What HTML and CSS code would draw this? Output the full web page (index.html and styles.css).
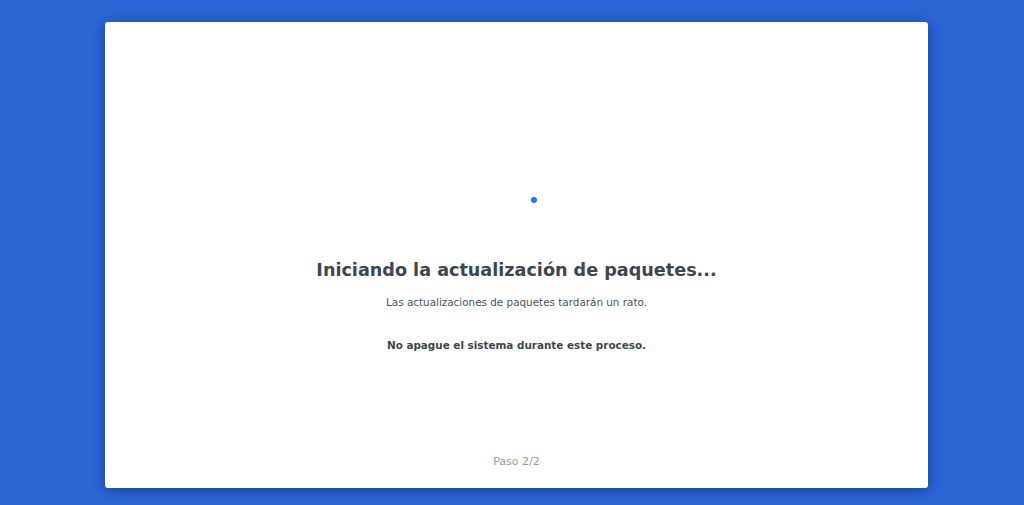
FILE: index.html
```html
<!DOCTYPE html>
<html lang="es">
<head>
<meta charset="utf-8">
<link rel="stylesheet" href="styles.css">
</head>
<body>
<div class="card">
  <div class="main">
    <div class="spinner"><span class="dot"></span></div>
    <h1 class="title">Iniciando la actualización de paquetes...</h1>
    <p class="subtitle">Las actualizaciones de paquetes tardarán un rato.</p>
    <p class="warning">No apague el sistema durante este proceso.</p>
  </div>
  <div class="step">Paso 2/2</div>
</div>
</body>
</html>
```
FILE: styles.css
```css
html, body {
  margin: 0;
  height: 100%;
}
body {
  background: #2b66d7;
  font-family: "DejaVu Sans", Verdana, sans-serif;
  color: #3b4651;
  padding: 22px 96px 17px 105px;
  box-sizing: border-box;
}
.card {
  background: #fff;
  height: 466px;
  border-radius: 3px;
  box-shadow: 0 2px 14px rgba(10, 30, 80, 0.55);
  display: flex;
  flex-direction: column;
  align-items: center;
  box-sizing: border-box;
  padding-top: 175px;
}
.main {
  flex: 1;
  display: flex;
  flex-direction: column;
  align-items: center;
}
.spinner {
  width: 6px;
  height: 6px;
  display: flex;
  margin-left: 35px;
}
.dot {
  width: 6px;
  height: 6px;
  border-radius: 50%;
  background: #1a7de0;
}
.title {
  margin: 55px 0 0;
  font-size: 17.6px;
  font-weight: bold;
  line-height: 24px;
}
.subtitle {
  margin: 12px 0 0;
  font-size: 10.4px;
  line-height: 16px;
  color: #4a535c;
}
.warning {
  margin: 27px 0 0;
  font-size: 10.4px;
  font-weight: bold;
  line-height: 16px;
}
.step {
  font-size: 11px;
  color: #9a9a9a;
  line-height: 16px;
  margin-bottom: 18px;
}
```
